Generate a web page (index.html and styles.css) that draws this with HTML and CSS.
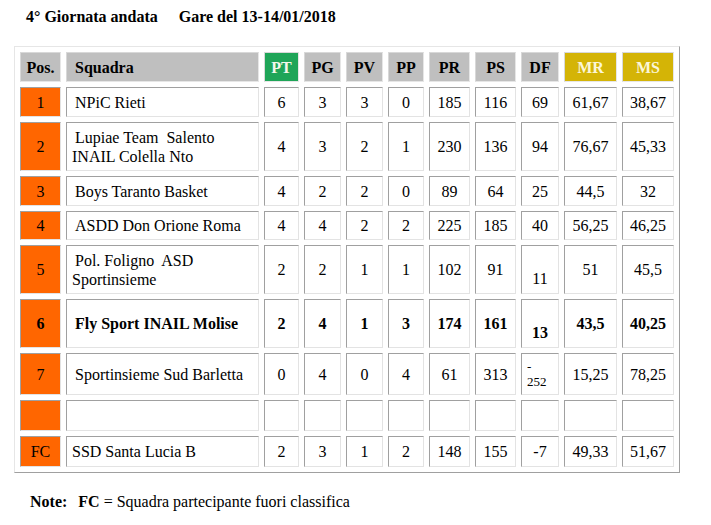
FILE: index.html
```html
<!DOCTYPE html>
<html lang="it">
<head>
<meta charset="utf-8">
<title>4° Giornata andata</title>
<link rel="stylesheet" href="styles.css">
</head>
<body>
<div class="page">
  <h1 class="title"><span>4° Giornata andata</span><span class="date">Gare del 13-14/01/2018</span></h1>
  <table class="standings">
    <colgroup>
      <col class="c-pos"><col class="c-team"><col class="c-pt"><col class="c-pg"><col class="c-pv"><col class="c-pp"><col class="c-pr"><col class="c-ps"><col class="c-df"><col class="c-mr"><col class="c-ms">
    </colgroup>
    <thead>
      <tr class="r-head">
        <th>Pos.</th><th class="team">Squadra</th><th class="green">PT</th><th>PG</th><th>PV</th><th>PP</th><th>PR</th><th>PS</th><th>DF</th><th class="gold">MR</th><th class="gold">MS</th>
      </tr>
    </thead>
    <tbody>
      <tr class="r30">
        <td class="pos">1</td><td class="team ind">NPiC Rieti</td><td>6</td><td>3</td><td>3</td><td>0</td><td>185</td><td>116</td><td>69</td><td>61,67</td><td>38,67</td>
      </tr>
      <tr class="r49">
        <td class="pos">2</td><td class="team"><span class="ind">Lupiae Team&nbsp; Salento</span><br>INAIL Colella Nto</td><td>4</td><td>3</td><td>2</td><td>1</td><td>230</td><td>136</td><td>94</td><td>76,67</td><td>45,33</td>
      </tr>
      <tr class="r30">
        <td class="pos">3</td><td class="team ind">Boys Taranto Basket</td><td>4</td><td>2</td><td>2</td><td>0</td><td>89</td><td>64</td><td>25</td><td>44,5</td><td>32</td>
      </tr>
      <tr class="r29">
        <td class="pos">4</td><td class="team ind">ASDD Don Orione Roma</td><td>4</td><td>4</td><td>2</td><td>2</td><td>225</td><td>185</td><td>40</td><td>56,25</td><td>46,25</td>
      </tr>
      <tr class="r49">
        <td class="pos">5</td><td class="team"><span class="ind">Pol. Foligno&nbsp; ASD</span><br>Sportinsieme</td><td>2</td><td>2</td><td>1</td><td>1</td><td>102</td><td>91</td><td class="low">11</td><td>51</td><td>45,5</td>
      </tr>
      <tr class="r49 bold">
        <td class="pos">6</td><td class="team ind">Fly Sport INAIL Molise</td><td>2</td><td>4</td><td>1</td><td>3</td><td>174</td><td>161</td><td class="low">13</td><td>43,5</td><td>40,25</td>
      </tr>
      <tr class="r42">
        <td class="pos">7</td><td class="team ind">Sportinsieme Sud Barletta</td><td>0</td><td>4</td><td>0</td><td>4</td><td>61</td><td>313</td><td class="small">-<br>252</td><td>15,25</td><td>78,25</td>
      </tr>
      <tr class="r31">
        <td class="pos"></td><td class="team"></td><td></td><td></td><td></td><td></td><td></td><td></td><td></td><td></td><td></td>
      </tr>
      <tr class="r31">
        <td class="pos">FC</td><td class="team">SSD Santa Lucia B</td><td>2</td><td>3</td><td>1</td><td>2</td><td>148</td><td>155</td><td>-7</td><td>49,33</td><td>51,67</td>
      </tr>
    </tbody>
  </table>
  <p class="note"><b>Note:</b><span class="gap"></span><b>FC</b> = Squadra partecipante fuori classifica</p>
</div>
</body>
</html>
```

FILE: styles.css
```css
* {
  box-sizing: border-box;
}

html, body {
  margin: 0;
  padding: 0;
  background: #ffffff;
}

body {
  font-family: "Liberation Serif", "Times New Roman", serif;
  font-size: 16px;
  color: #000000;
}

.page {
  padding: 8px 0 0 14px;
}

.title {
  margin: 0 0 0 12px;
  font-size: 16px;
  font-weight: bold;
  line-height: 18px;
  height: 38px;
}

.title .date {
  margin-left: 21px;
}

.standings {
  border-collapse: separate;
  border-spacing: 5px;
  table-layout: fixed;
  width: 666px;
  border: 1px solid;
  border-color: #e6e6e6 #a0a0a0 #a0a0a0 #e6e6e6;
}

.c-pos { width: 41px; }
.c-team { width: 193px; }
.c-pt { width: 35px; }
.c-pg { width: 37px; }
.c-pv { width: 37px; }
.c-pp { width: 36px; }
.c-pr { width: 41px; }
.c-ps { width: 41px; }
.c-df { width: 38px; }
.c-mr { width: 53px; }
.c-ms { width: 52px; }

.standings th,
.standings td {
  border: 1px solid;
  border-color: #a0a0a0 #e3e3e3 #e3e3e3 #a0a0a0;
  padding: 0 2px;
  text-align: center;
  vertical-align: middle;
  line-height: 19px;
  font-size: 16px;
}

.standings th {
  background: #bfbfbf;
  font-weight: bold;
  border-color: #d8d8d8 #e6e6e6 #e6e6e6 #d8d8d8;
}

.standings th.green {
  background: #1fa558;
  color: #f4f7ea;
}

.standings th.gold {
  background: #d4b406;
  color: #fbf6d8;
}

.standings .team {
  text-align: left;
  padding-left: 5px;
}

.standings th.team {
  padding-left: 8px;
}

.standings span.ind {
  padding-left: 3px;
}

.standings td.team.ind {
  padding-left: 8px;
}

.standings td.pos {
  background: #ff6600;
}

.r-head > * { height: 30px; }
.r30 > * { height: 30px; }
.r29 > * { height: 29px; }
.r49 > * { height: 49px; }
.r42 > * { height: 42px; }
.r31 > * { height: 31px; }

.bold td {
  font-weight: bold;
}

.standings td.low {
  vertical-align: bottom;
  padding-bottom: 5px;
}

.standings td.small {
  font-size: 13px;
  line-height: 15px;
  text-align: left;
  padding-left: 5px;
}

.note {
  margin: 20px 0 0 16px;
  font-size: 16px;
  line-height: 18px;
}

.note .gap {
  display: inline-block;
  width: 11px;
}
```
